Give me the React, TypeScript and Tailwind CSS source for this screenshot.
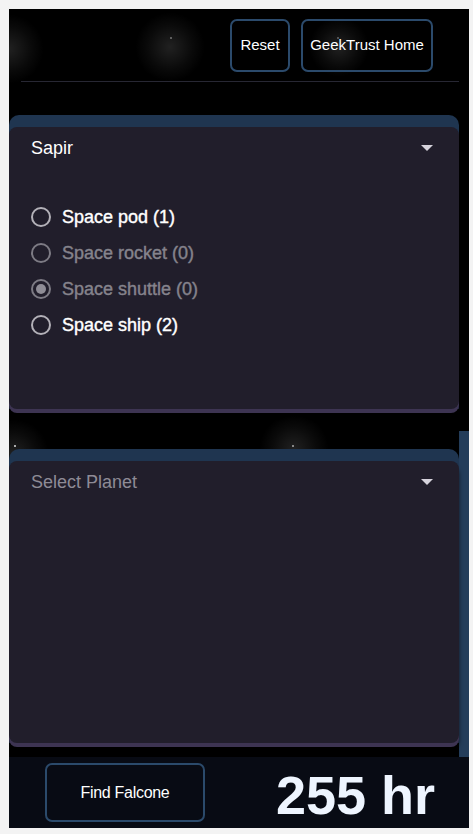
import React from 'react';

const vehicles = [
  { name: 'Space pod', count: 1, disabled: false, checked: false },
  { name: 'Space rocket', count: 0, disabled: true, checked: false },
  { name: 'Space shuttle', count: 0, disabled: true, checked: true },
  { name: 'Space ship', count: 2, disabled: false, checked: false },
];

function Caret() {
  return (
    <svg width="12" height="6" viewBox="0 0 12 6" className="shrink-0">
      <path d="M0 0 L12 0 L6 6 Z" fill="#d6d3dc" />
    </svg>
  );
}

function Radio({ checked, disabled }: { checked: boolean; disabled: boolean }) {
  return (
    <span
      className={`w-[20px] h-[20px] rounded-full border-2 flex items-center justify-center shrink-0 ${
        disabled ? 'border-[#7d7b84]' : 'border-[#b3b1b8]'
      }`}
    >
      {checked && <span className="w-[10px] h-[10px] rounded-full bg-[#8f8d96]" />}
    </span>
  );
}

function Glow({ className }: { className: string }) {
  return (
    <div
      className={`absolute pointer-events-none rounded-full bg-[radial-gradient(circle,rgba(255,255,255,0.13)_0%,rgba(255,255,255,0.04)_45%,transparent_70%)] ${className}`}
    />
  );
}

function DestinationCard({ planet, children }: { planet?: string; children?: React.ReactNode }) {
  return (
    <div className="rounded-t-[10px] bg-[#1f3550] pt-[12px] relative z-10">
      <div className="h-[282px] rounded-[8px] bg-[#211e2b] shadow-[0_4px_0_#3d3452,0_6px_4px_rgba(0,0,0,0.6)] px-[22px] pt-[10px]">
        <div className="flex items-center justify-between h-[22px] pr-[4px]">
          <span className={`text-[18px] ${planet ? 'text-white' : 'text-[#8e8b96]'}`}>
            {planet ?? 'Select Planet'}
          </span>
          <Caret />
        </div>
        {children}
      </div>
    </div>
  );
}

export default function App() {
  return (
    <div className="w-full h-[834px] bg-[#f3f3f3] pt-[9px] pl-[9px] font-['Liberation_Sans',Arial,sans-serif]">
      <div className="w-[460px] h-[819px] bg-black flex flex-col relative overflow-hidden">
        <Glow className="w-[70px] h-[70px] left-[-35px] top-[5px]" />
        <Glow className="w-[70px] h-[70px] left-[126px] top-[3px]" />
        <Glow className="w-[60px] h-[60px] left-[300px] top-[8px]" />
        <Glow className="w-[70px] h-[70px] left-[-30px] top-[410px]" />
        <Glow className="w-[70px] h-[70px] left-[250px] top-[405px]" />
        <div className="absolute left-[161px] top-[28px] w-[2px] h-[2px] rounded-full bg-[#777]" />
        <div className="absolute left-[328px] top-[28px] w-[2px] h-[2px] rounded-full bg-[#666]" />
        <div className="absolute left-[5px] top-[436px] w-[2px] h-[2px] rounded-full bg-[#ddd]" />
        <div className="absolute left-[283px] top-[436px] w-[2px] h-[2px] rounded-full bg-[#aaa]" />

        {/* header */}
        <header className="relative flex justify-end gap-[11px] pt-[10px] pr-[36px] h-[72px]">
          <button className="w-[60px] h-[53px] rounded-[7px] border-2 border-[#2b4a6b] text-white text-[15px]">
            Reset
          </button>
          <button className="w-[132px] h-[53px] rounded-[7px] border-2 border-[#2b4a6b] text-white text-[15px]">
            GeekTrust Home
          </button>
        </header>
        <div className="relative h-px bg-[#272733] ml-[12px] mr-[10px]" />

        {/* destinations */}
        <div className="relative flex-1 pt-[33px] pr-[10px]">
          <div className="absolute right-0 top-[349px] w-[10px] h-[326px] bg-[#243d5a]" />
          <DestinationCard planet="Sapir">
            <div className="flex flex-col gap-[16px] mt-[48px]">
              {vehicles.map((v) => (
                <label key={v.name} className="flex items-center gap-[11px] h-[20px]">
                  <Radio checked={v.checked} disabled={v.disabled} />
                  <span
                    className={`text-[18px] [-webkit-text-stroke:0.4px_currentColor] ${
                      v.disabled ? 'text-[#85838c]' : 'text-white'
                    }`}
                  >
                    {v.name} ({v.count})
                  </span>
                </label>
              ))}
            </div>
          </DestinationCard>
          <div className="h-[40px]" />
          <DestinationCard />
        </div>

        {/* footer */}
        <footer className="relative h-[71px] bg-[#080b14] flex items-center justify-between pl-[36px] pr-[34px]">
          <button className="w-[160px] h-[59px] rounded-[7px] border-2 border-[#2b4a6b] text-white text-[16px] tracking-[-0.3px]">
            Find Falcone
          </button>
          <span className="text-[54px] font-bold text-[#eef5ff] leading-none pt-[4px]">255 hr</span>
        </footer>
      </div>
    </div>
  );
}
